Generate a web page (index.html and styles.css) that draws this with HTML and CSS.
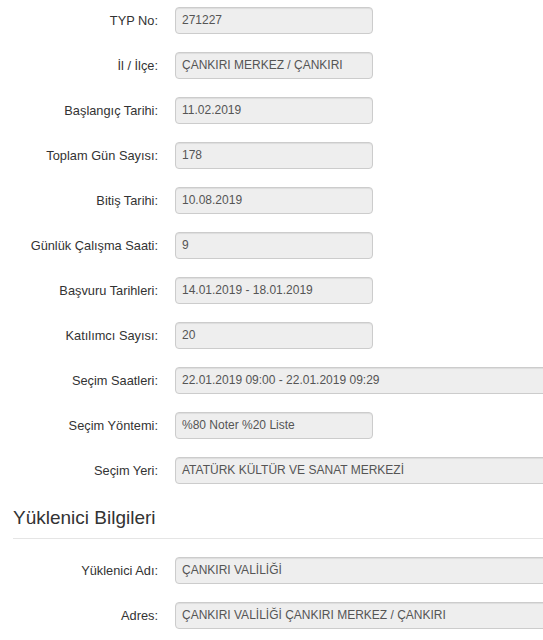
FILE: index.html
```html
<!DOCTYPE html>
<html lang="tr">
<head>
<meta charset="utf-8">
<link rel="stylesheet" href="styles.css">
</head>
<body>
<div class="page">
  <div class="form">
    <div class="row"><label class="lbl">TYP No:</label><div class="ctl">271227</div></div>
    <div class="row"><label class="lbl">İl / İlçe:</label><div class="ctl">ÇANKIRI MERKEZ / ÇANKIRI</div></div>
    <div class="row"><label class="lbl">Başlangıç Tarihi:</label><div class="ctl">11.02.2019</div></div>
    <div class="row"><label class="lbl">Toplam Gün Sayısı:</label><div class="ctl">178</div></div>
    <div class="row"><label class="lbl">Bitiş Tarihi:</label><div class="ctl">10.08.2019</div></div>
    <div class="row"><label class="lbl">Günlük Çalışma Saati:</label><div class="ctl">9</div></div>
    <div class="row"><label class="lbl">Başvuru Tarihleri:</label><div class="ctl">14.01.2019 - 18.01.2019</div></div>
    <div class="row"><label class="lbl">Katılımcı Sayısı:</label><div class="ctl">20</div></div>
    <div class="row"><label class="lbl">Seçim Saatleri:</label><div class="ctl wide">22.01.2019 09:00 - 22.01.2019 09:29</div></div>
    <div class="row"><label class="lbl">Seçim Yöntemi:</label><div class="ctl">%80 Noter %20 Liste</div></div>
    <div class="row"><label class="lbl">Seçim Yeri:</label><div class="ctl wide">ATATÜRK KÜLTÜR VE SANAT MERKEZİ</div></div>
  </div>
  <h3 class="section">Yüklenici Bilgileri</h3>
  <div class="form">
    <div class="row"><label class="lbl">Yüklenici Adı:</label><div class="ctl wide">ÇANKIRI VALİLİĞİ</div></div>
    <div class="row"><label class="lbl">Adres:</label><div class="ctl wide">ÇANKIRI VALİLİĞİ ÇANKIRI MERKEZ / ÇANKIRI</div></div>
  </div>
</div>
</body>
</html>
```

FILE: styles.css
```css
html, body {
  margin: 0;
  padding: 0;
  background: #fff;
  overflow: hidden;
}
body {
  font-family: "Liberation Sans", Arial, sans-serif;
  font-size: 13px;
  color: #333;
}
.page {
  padding-top: 7px;
}
.form {
  display: flex;
  flex-direction: column;
  gap: 18px;
}
.row {
  display: flex;
  align-items: center;
  gap: 17px;
}
.lbl {
  width: 158px;
  flex: none;
  text-align: right;
  font-size: 12.8px;
  color: #333;
}
.ctl {
  flex: none;
  box-sizing: border-box;
  width: 198px;
  height: 27px;
  line-height: 25px;
  padding: 0 6px;
  border: 1px solid #ccc;
  border-radius: 4px;
  background: #eee;
  color: #555;
  font-size: 12px;
  white-space: nowrap;
  box-shadow: inset 0 1px 1px rgba(0,0,0,.075);
}
.ctl.wide {
  width: 420px;
}
.section {
  margin: 23px 0 18px 13px;
  padding-bottom: 9px;
  border-bottom: 1px solid #e5e5e5;
  font-size: 19px;
  font-weight: normal;
  color: #333;
  line-height: 22px;
}
```
